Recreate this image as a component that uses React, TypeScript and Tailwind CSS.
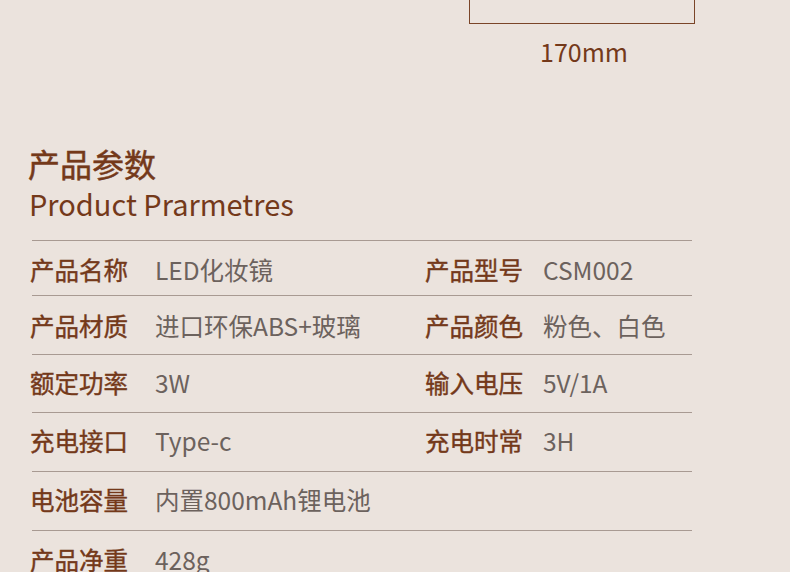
import React from "react";

const rows: { h: string; pad: string; cells: [string, string, string?, string?] }[] = [
  { h: "h-[55px]", pad: "pt-[4px]", cells: ["产品名称", "LED化妆镜", "产品型号", "CSM002"] },
  { h: "h-[59px]", pad: "pt-[2px]", cells: ["产品材质", "进口环保ABS+玻璃", "产品颜色", "粉色、白色"] },
  { h: "h-[58px]", pad: "pb-[2px]", cells: ["额定功率", "3W", "输入电压", "5V/1A"] },
  { h: "h-[59px]", pad: "pb-[2px]", cells: ["充电接口", "Type-c", "充电时常", "3H"] },
  { h: "h-[59px]", pad: "pb-[2px]", cells: ["电池容量", "内置800mAh锂电池"] },
  { h: "h-[59px]", pad: "pb-[2px]", cells: ["产品净重", "428g"] },
];

export default function App() {
  return (
    <div
      className="w-[790px] h-[572px] overflow-hidden bg-[#ebe3dd] text-[#74391a]"
      style={{ fontFamily: '"Noto Sans CJK SC", "Noto Sans", sans-serif' }}
    >
      {/* ruler */}
      <div className="ml-[469px] w-[226px] h-[24px] border-x border-b border-[#7a4528]" />
      <div className="ml-[471px] w-[226px] text-center text-[25px] leading-[30px] mt-[12px]">170mm</div>

      {/* title */}
      <div className="pl-[28px] mt-[79px]">
        <h2 className="text-[32px] leading-[36px] [-webkit-text-stroke:0.5px_#74391a]">产品参数</h2>
        <p className="pl-[1px] text-[29px] leading-[36px] mt-[4px]">Product Prarmetres</p>
      </div>

      {/* table */}
      <div className="ml-[32px] w-[660px] mt-[19px] border-t border-[#a89a92]">
        {rows.map((r, i) => (
          <div
            key={i}
            className={`${r.h} ${r.pad} flex items-center text-[24.5px] leading-[32px] ${
              i < 5 ? "border-b border-[#a89a92]" : ""
            }`}
          >
            <span className="-ml-[2px] w-[125px] [-webkit-text-stroke:0.4px_#74391a]">{r.cells[0]}</span>
            <span className="w-[270px] text-[#6c625d]">{r.cells[1]}</span>
            {r.cells[2] && (
              <span className="w-[118px] [-webkit-text-stroke:0.4px_#74391a]">{r.cells[2]}</span>
            )}
            {r.cells[3] && <span className="text-[#6c625d]">{r.cells[3]}</span>}
          </div>
        ))}
      </div>
    </div>
  );
}
